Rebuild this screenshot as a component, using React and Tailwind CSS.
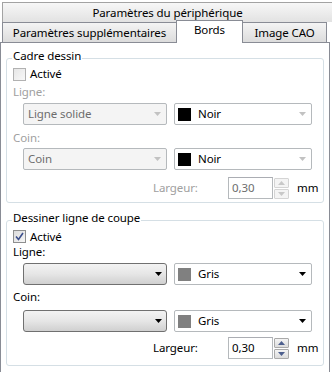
import React from "react";

function Arrow({ color = "#000" }) {
  return (
    <svg width="7" height="4" viewBox="0 0 7 4" className="shrink-0">
      <path d="M0 0H7L3.5 4Z" fill={color} />
    </svg>
  );
}

function Checkbox({ checked, disabled }) {
  return (
    <div
      className={
        "w-[13px] h-[13px] border flex items-center justify-center bg-gradient-to-br " +
        (disabled
          ? "border-[#b1b1b1] from-[#e6e6e6] to-[#f8f8f8]"
          : "border-[#8e8f8f] from-[#dcdcdc] to-[#f6f6f6]")
      }
    >
      {checked && (
        <svg width="9" height="9" viewBox="0 0 9 9">
          <path d="M1 4.5L3.5 7.5L8 1" stroke="#3c4f8c" strokeWidth="1.6" fill="none" />
        </svg>
      )}
    </div>
  );
}

function DisabledSelect({ text }) {
  return (
    <div className="w-[144px] h-[22px] border border-[#b5b9bc] rounded-[2px] bg-[#f4f4f4] flex items-center pl-[4px] pr-[5px] text-[#6d6d6d]">
      <span className="flex-1">{text}</span>
      <Arrow color="#c2c2c2" />
    </div>
  );
}

function EnabledSelect() {
  return (
    <div className="w-[144px] h-[22px] border border-[#707070] rounded-[3px] bg-gradient-to-b from-[#f3f3f3] via-[#e6e6e6] to-[#d0d0d0] flex items-center justify-end pr-[4px]">
      <Arrow color="#000" />
    </div>
  );
}

function ColorSelect({ swatch, text, disabled }) {
  return (
    <div className="w-[138px] h-[22px] border border-[#b5b9bc] rounded-[2px] bg-white flex items-center pl-[3px] pr-[5px]">
      <div className={"w-[13px] h-[13px] " + swatch} />
      <span className="flex-1 ml-[7px] text-black">{text}</span>
      <Arrow color={disabled ? "#c2c2c2" : "#000"} />
    </div>
  );
}

function Spinner({ disabled }) {
  const box = disabled
    ? "border-[#d4d4d4] bg-[#f4f4f4]"
    : "border-[#a9a9a9] bg-gradient-to-b from-[#f4f4f4] to-[#dcdcdc]";
  const c = disabled ? "#c8c8c8" : "#4d5f8e";
  return (
    <div className="flex flex-col gap-[1px] ml-[1px]">
      <div className={"w-[15px] h-[10px] border rounded-[1px] flex items-center justify-center " + box}>
        <svg width="7" height="4" viewBox="0 0 7 4">
          <path d="M0 4H7L3.5 0Z" fill={c} />
        </svg>
      </div>
      <div className={"w-[15px] h-[10px] border rounded-[1px] flex items-center justify-center " + box}>
        <svg width="7" height="4" viewBox="0 0 7 4">
          <path d="M0 0H7L3.5 4Z" fill={c} />
        </svg>
      </div>
    </div>
  );
}

function WidthRow({ disabled, className }) {
  return (
    <div className={"flex items-center ml-[140px] " + className}>
      <span className={"w-[75px] " + (disabled ? "text-[#a0a0a0]" : "text-black")}>Largeur:</span>
      <div
        className={
          "w-[45px] h-[22px] border border-[#b5b9bc] border-t-[#abadb3] bg-white flex items-center pl-[3px] " +
          (disabled ? "text-[#6d6d6d]" : "text-black")
        }
      >
        0,30
      </div>
      <Spinner disabled={disabled} />
      <span className="ml-[8px] text-black">mm</span>
    </div>
  );
}

export default function App() {
  return (
    <div className="w-[332px] h-[372px] overflow-hidden bg-white text-[11.5px] tracking-[-0.1px] leading-[16px] text-black font-['Noto_Sans',sans-serif]">
      {/* header */}
      <div className="ml-[2px] mt-[2px] h-[20px] border-t border-l border-[#a3a3a3] bg-gradient-to-b from-[#f7f7f7] to-[#e2e2e2] flex items-center justify-center">
        Paramètres du périphérique
      </div>
      {/* tabs */}
      <div className="ml-[2px] h-[20px] flex items-end">
        <div className="w-[174px] h-[20px] border-t border-l border-[#898c95] bg-gradient-to-b from-[#f4f4f4] to-[#dcdcdc] flex items-center justify-center">
          Paramètres supplémentaires
        </div>
        <div className="relative z-10 translate-y-[1px] w-[67px] h-[23px] border-t border-l border-r border-[#898c95] bg-white flex justify-center pt-[1px]">
          Bords
        </div>
        <div className="w-[84px] h-[20px] border-t border-r border-[#898c95] bg-gradient-to-b from-[#f4f4f4] to-[#dcdcdc] flex items-center justify-center">
          Image CAO
        </div>
      </div>
      {/* panel */}
      <div className="w-[330px] h-[340px] border-t border-l border-r border-[#898c95] bg-white pl-[5px]">
        {/* group 1 */}
        <div className="relative mt-[15px] w-[318px] border border-[#d5dfe5] rounded-[3px] pl-[6px] pb-[3px]">
          <span className="absolute top-[-11px] left-[5px] px-[1px] bg-white">Cadre dessin</span>
          <div className="mt-[7px] h-[16px] flex items-center">
            <Checkbox disabled />
            <span className="ml-[4px]">Activé</span>
          </div>
          <div className="mt-[2px] text-[#a0a0a0]">Ligne:</div>
          <div className="mt-[3px] ml-[10px] flex gap-[7px]">
            <DisabledSelect text="Ligne solide" />
            <ColorSelect swatch="bg-black" text="Noir" disabled />
          </div>
          <div className="mt-[5px] text-[#a0a0a0]">Coin:</div>
          <div className="mt-[2px] ml-[10px] flex gap-[7px]">
            <DisabledSelect text="Coin" />
            <ColorSelect swatch="bg-black" text="Noir" disabled />
          </div>
          <WidthRow disabled className="mt-[7px]" />
        </div>
        {/* group 2 */}
        <div className="relative mt-[17px] w-[318px] border border-[#d5dfe5] rounded-[3px] pl-[6px] pb-[6px]">
          <span className="absolute top-[-11px] left-[5px] px-[1px] bg-white">Dessiner ligne de coupe</span>
          <div className="mt-[8px] h-[15px] flex items-center">
            <Checkbox checked />
            <span className="ml-[4px]">Activé</span>
          </div>
          <div>Ligne:</div>
          <div className="mt-[3px] ml-[10px] flex gap-[7px]">
            <EnabledSelect />
            <ColorSelect swatch="bg-[#808080]" text="Gris" />
          </div>
          <div className="mt-[4px]">Coin:</div>
          <div className="mt-[5px] ml-[10px] flex gap-[7px]">
            <EnabledSelect />
            <ColorSelect swatch="bg-[#808080]" text="Gris" />
          </div>
          <WidthRow className="mt-[5px]" />
        </div>
      </div>
    </div>
  );
}
